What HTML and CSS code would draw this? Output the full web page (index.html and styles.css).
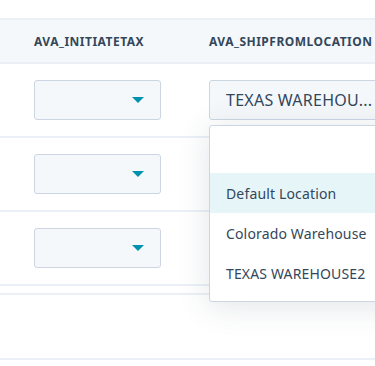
FILE: index.html
```html
<!DOCTYPE html>
<html>
<head>
<meta charset="utf-8">
<link rel="stylesheet" href="styles.css">
</head>
<body>
<div class="page">
  <div class="table">
    <div class="row head">
      <div class="cell c1">AVA_INITIATETAX</div>
      <div class="cell c2">AVA_SHIPFROMLOCATION</div>
    </div>
    <div class="row">
      <div class="cell c1"><div class="select small"><span class="caret"></span></div></div>
      <div class="cell c2"><div class="select wide"><span class="val">TEXAS WAREHOU...</span></div></div>
    </div>
    <div class="row">
      <div class="cell c1"><div class="select small"><span class="caret"></span></div></div>
      <div class="cell c2"></div>
    </div>
    <div class="row">
      <div class="cell c1"><div class="select small"><span class="caret"></span></div></div>
      <div class="cell c2"></div>
    </div>
    <div class="footer-line"></div>
    <div class="blank"></div>
  </div>
  <div class="menu">
    <div class="search"></div>
    <div class="opt active">Default Location</div>
    <div class="opt">Colorado Warehouse</div>
    <div class="opt">TEXAS WAREHOUSE2</div>
  </div>
</div>
</body>
</html>
```
FILE: styles.css
```css
html, body {
  margin: 0;
  padding: 0;
  background: #fff;
  overflow: hidden;
}
body {
  width: 375px;
  height: 366px;
  font-family: "Noto Sans", "Liberation Sans", sans-serif;
  color: #33475b;
}
.page {
  position: relative;
  padding-top: 18px;
  width: 375px;
  height: 348px;
  overflow: hidden;
}
.table {
  width: 600px;
}
.row {
  display: flex;
  height: 72px;
  border-bottom: 2px solid #eaf0f6;
  align-items: center;
}
.row.head {
  height: 42px;
  background: #f5f8fa;
  border-top: 2px solid #eaf0f6;
  border-bottom: 2px solid #eaf0f6;
  font-weight: 700;
  font-size: 12px;
  letter-spacing: 0.5px;
}
.cell.c1 {
  width: 209px;
  padding-left: 34px;
  box-sizing: border-box;
}
.cell.c2 {
  flex: 1;
}
.select {
  box-sizing: border-box;
  height: 40px;
  background: #f5f8fa;
  border: 1px solid #cbd6e2;
  border-radius: 3px;
  display: flex;
  align-items: center;
}
.select.small {
  width: 127px;
  justify-content: flex-end;
  padding-right: 16px;
}
.select.wide {
  width: 260px;
  padding-left: 16px;
  font-size: 16px;
  letter-spacing: 0.25px;
}
.caret {
  width: 0;
  height: 0;
  border-left: 6px solid transparent;
  border-right: 6px solid transparent;
  border-top: 6px solid #0091ae;
}
.footer-line {
  height: 7px;
  border-bottom: 2px solid #eaf0f6;
}
.blank {
  height: 63px;
  border-bottom: 2px solid #eaf0f6;
}
.menu {
  position: absolute;
  left: 209px;
  top: 125px;
  width: 240px;
  box-sizing: border-box;
  background: #fff;
  border: 1px solid #cbd6e2;
  border-radius: 3px;
  box-shadow: 0 4px 32px rgba(45, 62, 80, 0.14);
  padding-bottom: 8px;
  font-size: 14px;
  letter-spacing: 0.15px;
}
.search {
  height: 47px;
}
.opt {
  height: 40px;
  display: flex;
  align-items: center;
  padding-left: 16px;
}
.opt.active {
  background: #e5f5f8;
}
```
